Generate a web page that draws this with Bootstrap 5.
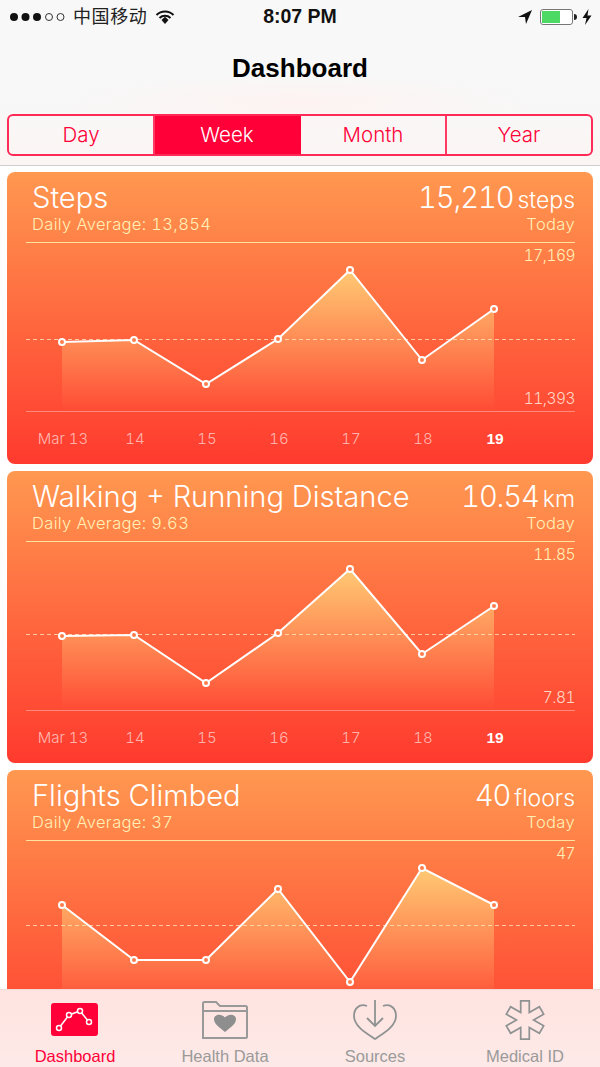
<!DOCTYPE html>
<html lang="en">
<head>
<meta charset="UTF-8">
<meta name="viewport" content="width=device-width, initial-scale=1.0">
<title>Dashboard</title>
<link href="https://cdn.jsdelivr.net/npm/bootstrap@5.3.0/dist/css/bootstrap.min.css" rel="stylesheet">
<style>
  body { background: #fff; height: 1067px; overflow: hidden; font-family: "Liberation Sans", Arial, sans-serif; font-variant-numeric: tabular-nums; }
  .top-head { height: 166px; padding: 0 7px; border-bottom: 1px solid #cfcfcf;
    background: radial-gradient(ellipse 240px 30px at 50% 102px, #fdf3f2, rgba(253,243,242,0)), linear-gradient(#f8f8f8 60%, #fbf5f3); }
  .status-line { height: 34px; font-size: 18px; color: #111; padding: 0 1px 0 2px; }
  .carrier { font-family: "Liberation Sans", "Noto Sans CJK SC", sans-serif; color: #222; font-size: 18px; letter-spacing: .6px; }
  .clock { font-weight: 700; font-size: 19.5px; position: absolute; left: 0; right: 0; text-align: center; }
  .page-title { font-size: 26px; font-weight: 700; color: #000; text-align: center; line-height: 30px; margin: 19px 0 0; }
  .seg-group { margin-top: 31px; height: 42px; border: 2px solid #ff2a55; border-radius: 6px; overflow: hidden; }
  .seg-item { flex: 1 1 0; display: flex; align-items: center; justify-content: center; color: #ff0038;
    font-family: Inter, sans-serif; font-weight: 300; font-size: 20.5px; border-right: 2px solid #ff3a63; }
  .seg-item:last-child { border-right: 0; }
  .seg-item.on { background: #ff0038; color: #fff; border-right-color: #ff0038; }
  .cards-wrap { padding: 6px 7px 0; }
  .stat-card { height: 292px; margin-bottom: 7px; border: 0; border-radius: 8px; color: #fff; overflow: hidden;
    background: linear-gradient(#ff9850, #ff3a2e); }
  .stat-head { height: 71px; margin: 0 18px -1px 19px; padding-left: 6px; border-bottom: 1px solid rgba(255,236,170,.9); }
  .stat-name { font-family: Inter, sans-serif; font-weight: 300; font-size: 29.1px; line-height: 36px; padding-top: 8px; }
  .stat-val { font-family: Inter, sans-serif; font-weight: 300; font-size: 29.1px; line-height: 36px; padding-top: 8px; letter-spacing: -1.1px; }
  .stat-val small { font-size: 23px; margin-left: 4px; letter-spacing: 0; }
  .stat-sub { font-family: Inter, sans-serif; font-weight: 350; font-size: 16.5px; line-height: 20px; color: #fff0b8; margin-top: -4px; letter-spacing: .35px; }
  .chart-box { height: 169px; }
  .chart-box svg { display: block; }
  .limit-top, .limit-bottom { position: absolute; right: 18px; font-family: Inter, sans-serif; font-weight: 350; font-size: 15.5px; line-height: 18px; letter-spacing: -.5px; }
  .limit-top { top: 5px; color: #fff0b8; }
  .limit-bottom { bottom: 3px; color: #ffd5c4; }
  .axis-line { margin: 0 18px 0 19px; border-top: 1px solid rgba(255,255,255,.35); padding: 17px 0 0 0; }
  .axis-cell { width: 72px; text-align: center; font-family: Inter, sans-serif; font-weight: 350; font-size: 15px; line-height: 20px; color: rgba(255,255,255,.62); }
  .axis-cell.today { color: #fff; font-weight: 700; font-family: "Liberation Sans", sans-serif; font-size: 15.5px; }
  .axis-row { margin-left: 1px; }
  .tabs-bottom { height: 78px; background: linear-gradient(#ffe3e0, #fdeae8); border-top: 1px solid #f4d8d4; }
  .tab-item { width: 150px; display: flex; flex-direction: column; align-items: center; color: #9a9a9a; font-size: 16.5px; line-height: 18px; }
  .tab-item.on { color: #ff0038; }
  .tab-item svg { display: block; flex-shrink: 0; margin-top: 9px; margin-bottom: -1px; }
</style>
</head>
<body>

<div class="top-head">
  <div class="status-line d-flex align-items-center justify-content-between position-relative">
    <div class="d-flex align-items-center">
      <svg width="60" height="12" viewBox="0 0 60 12" class="me-1">
        <circle cx="5" cy="6" r="4" fill="#111"/><circle cx="16.500" cy="6" r="4" fill="#111"/><circle cx="28" cy="6" r="4" fill="#111"/>
        <circle cx="40" cy="6" r="3.500" fill="none" stroke="#333"/><circle cx="51.500" cy="6" r="3.500" fill="none" stroke="#333"/>
      </svg>
      <span class="carrier">中国移动</span>
      <svg width="20" height="16" viewBox="0 0 20 16" class="ms-2">
        <path d="M1.500 6 A12 12 0 0 1 18.500 6" fill="none" stroke="#111" stroke-width="2"/>
        <path d="M4.500 9 A8 8 0 0 1 15.500 9" fill="none" stroke="#111" stroke-width="2"/>
        <path d="M6.500 11 L10 7.800 L13.500 11 L10 15 Z" fill="#111"/>
      </svg>
    </div>
    <div class="clock">8:07 PM</div>
    <div class="d-flex align-items-center">
      <svg width="14" height="14" viewBox="0 0 14 14"><path d="M0 7 L14 0 L8 14 L7 7 Z" fill="#111"/></svg>
      <svg width="38" height="16" viewBox="0 0 38 16" class="ms-2">
        <rect x=".5" y=".5" width="32" height="15" rx="2.500" fill="#fff" stroke="#777"/>
        <rect x="2" y="2" width="18" height="12" fill="#4cd964"/>
        <path d="M34 5 A3 3 0 0 1 34 11 Z" fill="#222"/>
      </svg>
      <svg width="10" height="16" viewBox="0 0 10 16" class="ms-1"><path d="M6.500 0 L0.500 9 L4.500 9 L3 16 L9.500 6.500 L5.500 6.500 Z" fill="#111"/></svg>
    </div>
  </div>
  <h1 class="page-title">Dashboard</h1>
  <div class="seg-group d-flex">
    <div class="seg-item">Day</div>
    <div class="seg-item on">Week</div>
    <div class="seg-item">Month</div>
    <div class="seg-item">Year</div>
  </div>
</div>

<div class="cards-wrap" id="cards"></div>

<div class="tabs-bottom d-flex justify-content-center position-fixed bottom-0 start-0 end-0">
  <div class="tab-item on">
    <svg width="48" height="49" viewBox="0 0 48 49">
      <rect x="0" y="4" width="47" height="33" rx="3" fill="#ff0038"/>
      <polyline points="8,29 18,16 29,12 38,23" fill="none" stroke="#fff" stroke-width="1.500"/>
      <g fill="#ff0038" stroke="#fff" stroke-width="1.500"><circle cx="8" cy="29" r="2.500"/><circle cx="18" cy="16" r="2.500"/><circle cx="29" cy="12" r="2.500"/><circle cx="38" cy="23" r="2.500"/></g>
    </svg>
    <span>Dashboard</span>
  </div>
  <div class="tab-item">
    <svg width="46" height="49" viewBox="0 0 46 49">
      <path d="M1 39 V4.500 Q1 3 2.500 3 H14 L18 7 H43.500 Q45 7 45 8.500 V37.500 Q45 39 43.500 39 Z M1 12 H45" fill="none" stroke="#999" stroke-width="2"/>
      <path d="M23 33 C17 28 12 25 12 20 C12 15.500 19 14 23 18.500 C27 14 34 15.500 34 20 C34 25 29 28 23 33 Z" fill="#8e8e8e"/>
    </svg>
    <span>Health Data</span>
  </div>
  <div class="tab-item">
    <svg width="46" height="49" viewBox="0 0 46 49">
      <path d="M15 7 C7 4 2 10 2 17 C2 27 14 34 23 40 C32 34 44 27 44 17 C44 10 39 4 31 7" fill="none" stroke="#8f9292" stroke-width="1.800"/>
      <path d="M23 1 V27 M15 19 L23 27 L31 19" fill="none" stroke="#8f9292" stroke-width="1.800"/>
    </svg>
    <span>Sources</span>
  </div>
  <div class="tab-item">
    <svg width="42" height="49" viewBox="-22 -22 44 51.330">
      <polygon points="-4.500,-20 4.500,-20 4.500,-7.800 15.070,-13.900 19.570,-6.100 9,0 19.570,6.100 15.070,13.900 4.500,7.800 4.500,20 -4.500,20 -4.500,7.800 -15.070,13.900 -19.570,6.100 -9,0 -19.570,-6.100 -15.070,-13.900 -4.500,-7.800" fill="none" stroke="#8f9292" stroke-width="1.800"/>
    </svg>
    <span>Medical ID</span>
  </div>
</div>

<script src="https://cdn.jsdelivr.net/npm/bootstrap@5.3.0/dist/js/bootstrap.bundle.min.js"></script>
<script>
  const charts = [
    { name: 'Steps', val: '15,210', unit: 'steps', avg: '13,854', hi: '17,169', lo: '11,393', mid: 97,
      ys: [100, 98, 142, 97, 28, 118, 67] },
    { name: 'Walking + Running Distance', val: '10.54', unit: 'km', avg: '9.63', hi: '11.85', lo: '7.81', mid: 93,
      ys: [95, 94, 142, 92, 28, 113, 65] },
    { name: 'Flights Climbed', val: '40', unit: 'floors', avg: '37', hi: '47', lo: '', mid: 85,
      ys: [65, 120, 120, 49, 142, 28, 65] }
  ];
  const days = ['Mar 13', '14', '15', '16', '17', '18', '19'];

  document.getElementById('cards').innerHTML = charts.map(function (c, n) {
    const pts = c.ys.map((y, i) => [55 + i * 72, y]);
    const line = pts.map(p => p.join(',')).join(' ');
    const dots = pts.map(p => `<circle cx="${p[0]}" cy="${p[1]}" r="3" fill="#ff7d4c" stroke="#fff" stroke-width="2"/>`).join('');
    const labels = days.map((d, i) => `<div class="axis-cell${i === 6 ? ' today' : ''}">${d}</div>`).join('');
    return `
    <div class="card stat-card">
      <div class="stat-head">
        <div class="d-flex justify-content-between">
          <div class="stat-name">${c.name}</div>
          <div class="stat-val">${c.val}<small>${c.unit}</small></div>
        </div>
        <div class="d-flex justify-content-between stat-sub">
          <div>Daily Average: ${c.avg}</div>
          <div>Today</div>
        </div>
      </div>
      <div class="chart-box position-relative">
        <svg width="586" height="169" viewBox="0 0 586 169">
          <defs><linearGradient id="fade${n}" gradientUnits="userSpaceOnUse" x1="0" y1="28" x2="0" y2="169">
            <stop offset="0" stop-color="#ffd87c" stop-opacity=".85"/>
            <stop offset="1" stop-color="#ffb070" stop-opacity="0"/>
          </linearGradient></defs>
          <polygon points="55,169 ${line} 487,169" fill="url(#fade${n})"/>
          <line x1="19" x2="568" y1="${c.mid}.5" y2="${c.mid}.5" stroke="#ffe3b8" stroke-opacity=".8" stroke-dasharray="4 3"/>
          <polyline points="${line}" fill="none" stroke="#fff" stroke-width="2"/>
          ${dots}
        </svg>
        <div class="limit-top">${c.hi}</div>
        <div class="limit-bottom">${c.lo}</div>
      </div>
      <div class="axis-line">
        <div class="axis-row d-flex">${labels}</div>
      </div>
    </div>`;
  }).join('');
</script>
</body>
</html>
